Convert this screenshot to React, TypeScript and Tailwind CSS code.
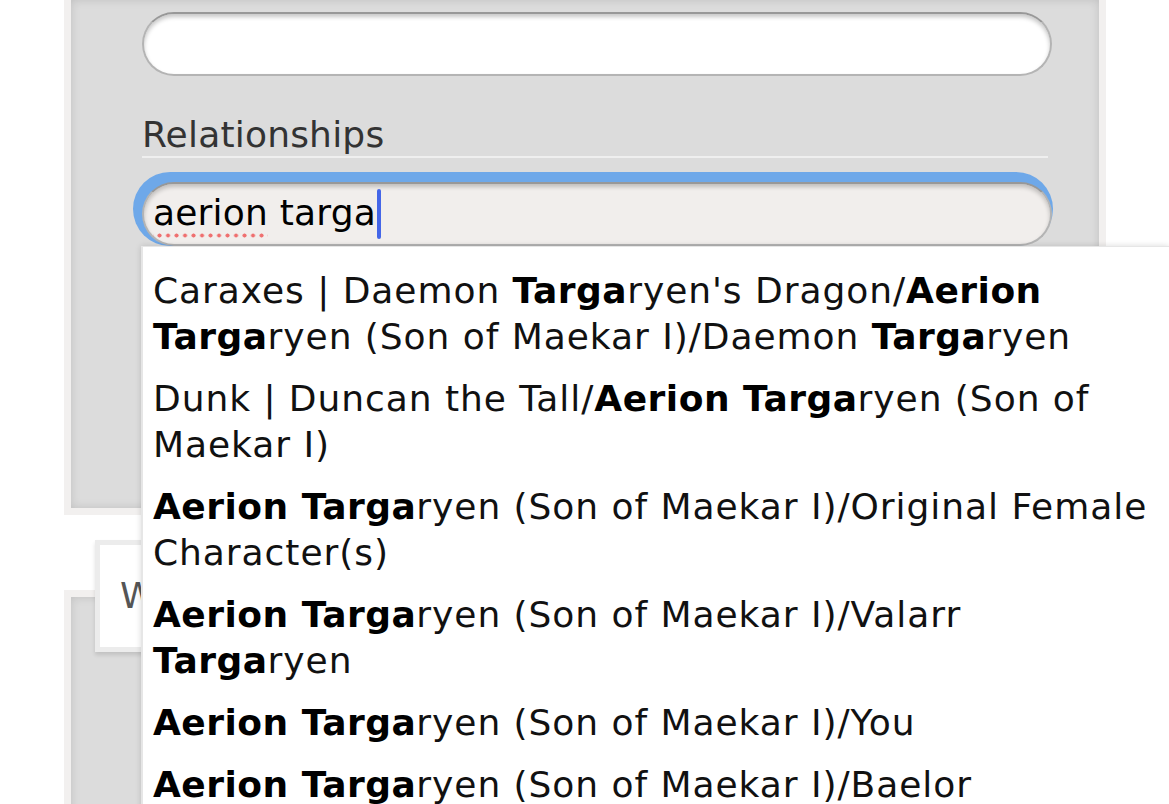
import React from "react";

type Seg = { t: string; b?: boolean };

const B = (t: string): Seg => ({ t, b: true });
const N = (t: string): Seg => ({ t });

const items: Seg[][] = [
  [N("Caraxes | Daemon "), B("Targa"), N("ryen's Dragon/"), B("Aerion Targa"), N("ryen (Son of Maekar I)/Daemon "), B("Targa"), N("ryen")],
  [N("Dunk | Duncan the Tall/"), B("Aerion Targa"), N("ryen (Son of Maekar I)")],
  [B("Aerion Targa"), N("ryen (Son of Maekar I)/Original Female Character(s)")],
  [B("Aerion Targa"), N("ryen (Son of Maekar I)/Valarr "), B("Targa"), N("ryen")],
  [B("Aerion Targa"), N("ryen (Son of Maekar I)/You")],
  [B("Aerion Targa"), N("ryen (Son of Maekar I)/Baelor")],
];

export default function App() {
  return (
    <div
      className="relative w-[1169px] h-[804px] overflow-hidden bg-white text-black"
      style={{ fontFamily: '"DejaVu Sans", Verdana, sans-serif' }}
    >
      {/* Panel 1 */}
      <div className="ml-[64px] w-[1042px] h-[515px] box-border border-[7px] border-t-0 border-[#f2f0ef] bg-[#dcdcdc] shadow-[inset_0_0_10px_rgba(0,0,0,0.13)] pt-[12px] pl-[71px] pr-[47px]">
        <div className="h-[64px] w-full rounded-full bg-white border-2 border-[#b4b4b4] border-t-[#989898] shadow-[inset_0_3px_4px_rgba(0,0,0,0.22)]" />
        <div className="mt-[38px] w-[906px] border-b-2 border-[#efefef] text-[36px] leading-[42px] tracking-[0.2px] text-[#333333]">
          Relationships
        </div>
        <div className="mt-[24px] h-[64px] w-full rounded-full bg-[#f1eeec] border-2 border-[#b4b4b4] border-t-[#989898] shadow-[inset_0_3px_4px_rgba(0,0,0,0.2),-4px_-5px_0_5px_#6ea8e9] flex items-center pl-[9px]">
          <div className="flex items-start h-[46px] pt-[1px]">
            <span className="text-[36px] leading-[42px] tracking-[0.2px] text-black whitespace-pre">
              <span className="inline-block h-[46px] align-top bg-[radial-gradient(circle,#ef6f6f_1.7px,transparent_2.3px)] bg-[length:8.5px_5px] bg-repeat-x bg-bottom">aerion</span>
              {" targa"}
            </span>
          </div>
          <span className="inline-block w-[4px] h-[50px] rounded-[2px] bg-[#4466e8] ml-[1px]" />
        </div>
      </div>

      {/* Lower area */}
      <div className="mt-[25px]">
        <div className="relative z-[1] ml-[95px] w-[320px] h-[112px] box-border border-[5px] border-[#ececec] bg-white shadow-[0_3px_4px_rgba(0,0,0,0.12)] flex items-center pl-[20px] text-[36px] text-[#555555]">
          Work Text
        </div>
        <div className="-mt-[62px] ml-[64px] w-[1042px] h-[400px] box-border border-[7px] border-b-0 border-[#f2f0ef] bg-[#dcdcdc] shadow-[inset_0_0_10px_rgba(0,0,0,0.13)]" />
      </div>

      {/* Autocomplete dropdown */}
      <div className="absolute left-[141px] top-[246px] w-[1028px] z-10 bg-white border-l-2 border-t border-[#e6e6e6] shadow-[0_0_6px_rgba(0,0,0,0.15)] pt-[13px] pb-[20px]">
        {items.map((segs, i) => (
          <div key={i} className="pl-[10px] pr-[12px] py-[8px] text-[36px] leading-[46px] tracking-[0.95px] text-[#111111]">
            {segs.map((s, j) =>
              s.b ? (
                <b key={j} className="font-bold tracking-[0.5px] text-black">{s.t}</b>
              ) : (
                <span key={j}>{s.t}</span>
              )
            )}
          </div>
        ))}
      </div>
    </div>
  );
}
